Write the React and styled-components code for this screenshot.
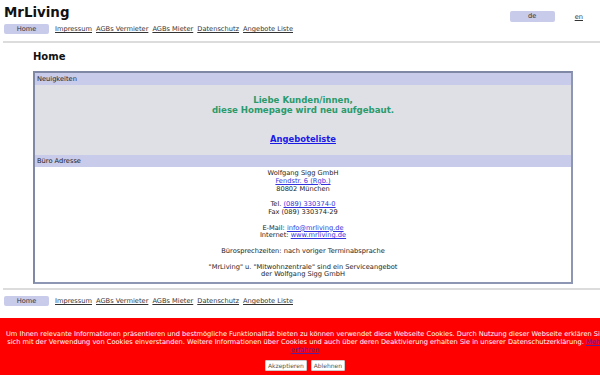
import React from "react";
import styled, { createGlobalStyle } from "styled-components";

const GlobalStyle = createGlobalStyle`
  html, body { margin: 0; padding: 0; background: #fff; }
  body {
    font-family: "DejaVu Sans", Verdana, sans-serif;
    color: #222;
    overflow: hidden;
  }
`;

const Page = styled.div`
  width: 600px;
  height: 375px;
  position: relative;
  overflow: hidden;
`;

const Header = styled.header`
  display: flex;
  justify-content: space-between;
  align-items: flex-start;
  padding: 5px 17px 0 4px;
`;

const Brand = styled.div`
  display: flex;
  flex-direction: column;
`;

const Title = styled.h1`
  margin: 0;
  font-size: 13.4px;
  line-height: 16px;
  font-weight: bold;
  color: #111;
`;

const Nav = styled.nav`
  display: flex;
  align-items: center;
  gap: 4px;
  margin-top: ${(p) => p.$top || 3}px;
  padding-left: ${(p) => p.$left || 0}px;
`;

const NavButton = styled.span`
  display: inline-block;
  width: 45px;
  height: 10px;
  line-height: 10px;
  background: #c9cbea;
  border-radius: 2px;
  text-align: center;
  font-size: 6.67px;
  color: #333;
  margin-right: 2px;
`;

const NavLink = styled.a`
  font-size: 6.67px;
  color: #333;
  text-decoration: underline;
  line-height: 10px;
`;

const LangBar = styled.div`
  display: flex;
  align-items: center;
  gap: 20px;
  margin-top: 6px;
`;

const LangButton = styled.span`
  display: inline-block;
  width: 45px;
  height: 11px;
  line-height: 11px;
  background: #c9cbea;
  border-radius: 2px;
  text-align: center;
  font-size: 6.67px;
  color: #333;
`;

const Rule = styled.div`
  height: 2px;
  background: #dcdcdc;
  margin: ${(p) => p.$top}px 0 0 3px;
`;

const Main = styled.main`
  padding: 0 27px 0 33px;
`;

const Heading = styled.h2`
  margin: 8px 0 0;
  font-size: 10px;
  line-height: 12px;
  font-weight: bold;
  color: #111;
`;

const Box = styled.section`
  margin-top: 8px;
  border: 2px solid #8d96b2;
  border-top-color: #7f88a5;
  border-left-color: #7f88a5;
`;

const BoxHead = styled.div`
  background: #c9cbea;
  height: 12px;
  line-height: 12px;
  padding-left: 2px;
  font-size: 6.67px;
  color: #222;
`;

const NewsBody = styled.div`
  background: #dfe0e5;
  height: 70px;
  display: flex;
  flex-direction: column;
  align-items: center;
  padding-top: 10px;
  box-sizing: border-box;
`;

const Greeting = styled.p`
  margin: 0;
  font-size: 8.6px;
  line-height: 10px;
  font-weight: bold;
  color: #2b9a6b;
  text-align: center;
`;

const OfferLink = styled.a`
  margin-top: 19px;
  font-size: 8.4px;
  font-weight: bold;
  color: #1a1ae6;
  text-decoration: underline;
`;

const Address = styled.div`
  background: #fff;
  padding: 3px 0 3px;
  text-align: center;
  font-size: 6.67px;
  line-height: 7.8px;
  color: #222;
`;

const Para = styled.p`
  margin: 0 0 7.8px;
  &:last-child { margin-bottom: 0; }
`;

const ALink = styled.a`
  color: #3333dd;
  text-decoration: underline;
`;

const Cookie = styled.div`
  position: absolute;
  left: 0;
  bottom: 0;
  width: 600px;
  height: 57px;
  background: #ff0000;
  padding: 0 5px;
  box-sizing: content-box;
  text-align: center;
`;

const CookieText = styled.p`
  margin: 12px 0 0;
  font-size: 6.67px;
  line-height: 8px;
  color: #fff;
  white-space: nowrap;
`;

const CookieLink = styled.a`
  color: #5b1f9c;
  text-decoration: underline;
`;

const ButtonRow = styled.div`
  display: flex;
  justify-content: center;
  gap: 4px;
  margin-top: 6px;
`;

const CookieButton = styled.button`
  font-family: inherit;
  font-size: 6px;
  color: #555;
  background: #fff;
  border: 1px solid #ccc;
  height: 11px;
  line-height: 9px;
  padding: 0 2px;
  border-radius: 1px;
`;

const links = ["Impressum", "AGBs Vermieter", "AGBs Mieter", "Datenschutz", "Angebote Liste"];

function MainNav({ top, left }) {
  return (
    <Nav $top={top} $left={left}>
      <NavButton>Home</NavButton>
      {links.map((l) => (
        <NavLink key={l} href="#">{l}</NavLink>
      ))}
    </Nav>
  );
}

export default function App() {
  return (
    <Page>
      <GlobalStyle />
      <Header>
        <Brand>
          <Title>MrLiving</Title>
          <MainNav top={3} />
        </Brand>
        <LangBar>
          <LangButton>de</LangButton>
          <NavLink href="#">en</NavLink>
        </LangBar>
      </Header>
      <Rule $top={7} />
      <Main>
        <Heading>Home</Heading>
        <Box>
          <BoxHead>Neuigkeiten</BoxHead>
          <NewsBody>
            <Greeting>
              Liebe Kunden/innen,
              <br />
              diese Homepage wird neu aufgebaut.
            </Greeting>
            <OfferLink href="#">Angeboteliste</OfferLink>
          </NewsBody>
          <BoxHead>Büro Adresse</BoxHead>
          <Address>
            <Para>
              Wolfgang Sigg GmbH
              <br />
              <ALink href="#">Fendstr. 6 (Rgb.)</ALink>
              <br />
              80802 München
            </Para>
            <Para>
              Tel. <ALink href="#">(089) 330374-0</ALink>
              <br />
              Fax (089) 330374-29
            </Para>
            <Para>
              E-Mail: <ALink href="#">info@mrliving.de</ALink>
              <br />
              Internet: <ALink href="#">www.mrliving.de</ALink>
            </Para>
            <Para>Bürosprechzeiten: nach voriger Terminabsprache</Para>
            <Para>
              "MrLiving" u. "Mitwohnzentrale" sind ein Serviceangebot
              <br />
              der Wolfgang Sigg GmbH
            </Para>
          </Address>
        </Box>
      </Main>
      <Rule $top={4} />
      <MainNav top={6} left={4} />
      <Cookie>
        <CookieText>
          Um Ihnen relevante Informationen präsentieren und bestmögliche Funktionalität bieten zu können verwendet diese Webseite Cookies. Durch Nutzung dieser Webseite erklären Sie
          <br />
          sich mit der Verwendung von Cookies einverstanden. Weitere Informationen über Cookies und auch über deren Deaktivierung erhalten Sie in unserer Datenschutzerklärung. <CookieLink href="#">Mehr</CookieLink>
          <br />
          <CookieLink href="#">erfahren</CookieLink>
        </CookieText>
        <ButtonRow>
          <CookieButton>Akzeptieren</CookieButton>
          <CookieButton>Ablehnen</CookieButton>
        </ButtonRow>
      </Cookie>
    </Page>
  );
}
